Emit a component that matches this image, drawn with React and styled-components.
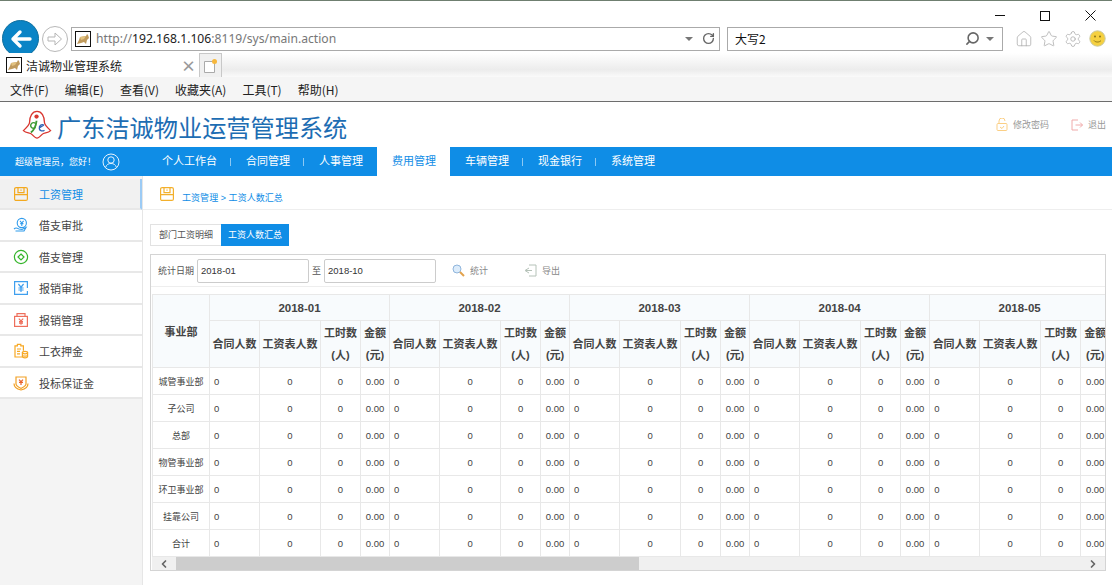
import React from 'react';
import styled, { createGlobalStyle } from 'styled-components';
import { ChevronLeft, ChevronRight, RotateCw, Search, Home, Star, Settings } from 'lucide-react';

const GlobalStyle = createGlobalStyle`
  html, body {
    margin: 0;
    padding: 0;
    height: 100%;
    overflow: hidden;
    background: #fff;
    font-family: "Liberation Sans", "Noto Sans CJK SC", sans-serif;
  }
  * { box-sizing: border-box; }
`;

const menus = ['文件(F)', '编辑(E)', '查看(V)', '收藏夹(A)', '工具(T)', '帮助(H)'];
const navs = ['个人工作台', '合同管理', '人事管理', '费用管理', '车辆管理', '现金银行', '系统管理'];
const months = ['2018-01', '2018-02', '2018-03', '2018-04', '2018-05', '2018-06', '2018-07', '2018-08', '2018-09', '2018-10'];
const depts = ['城管事业部', '子公司', '总部', '物管事业部', '环卫事业部', '挂靠公司', '合计'];

// Favicon of the tab and address bar
const Cat = () => (
  <svg width="16" height="16" viewBox="0 0 16 16">
    <rect x="0.5" y="0.5" width="15" height="15" fill="#fff" stroke="#111" />
    <path d="M2 13l2-4 1-3 6-1 1-2 1 1 1 3-2 2-1 4-2-2-3 1z" fill="#c09a5c" />
    <path d="M5 6l6-1-2 3-3 1z" fill="#e2c27f" />
  </svg>
);

const Logo = () => (
  <svg width="30" height="30" viewBox="0 0 32 32">
    <path d="M16 1.500c-5 0-8 5-8 12 0 2-3 5-6.500 8.500 3 3 7 2 9 4 2 2 4 4 5.500 4s3.500-2 5.500-4c2-2 6-1 9-4-3.500-3.500-6.500-6.500-6.500-8.500 0-7-3-12-8-12z" fill="#fff" stroke="#d9362f" strokeWidth="1.400" />
    <circle cx="15.500" cy="7" r="2.300" fill="#d9362f" />
    <path d="M15.500 11.500c-.5 5-2 9.500-6 12.500" fill="none" stroke="#3f9b35" strokeWidth="2" />
    <path d="M14.500 14.500a3 3 0 1 0 0 4" fill="none" stroke="#3f9b35" strokeWidth="1.500" />
    <path d="M23.500 16c-3-1.500-5.500 1-5 4 .5 2.500 3.500 3 5.500 1.500M18.800 19l4.700-3" fill="none" stroke="#2f62b3" strokeWidth="1.400" />
  </svg>
);

const Box = ({ color }) => (
  <svg width="16" height="16" viewBox="0 0 16 16" fill="none" stroke={color} strokeWidth="1.200">
    <rect x="1.600" y="1.600" width="12.800" height="12.800" rx="1.500" />
    <path d="M1.600 8.600h12.800M5 1.600v5h6v-5" />
    <path d="M8 3.400v1.400" />
  </svg>
);

const menuIcons = [
  <Box color="#f3a91f" />,
  <svg width="16" height="16" viewBox="0 0 16 16" fill="none" stroke="#2f9bec" strokeWidth="1.100">
    <circle cx="8.800" cy="6" r="4.600" />
    <path d="M7 3.800l1.800 2.200 1.800-2.200M8.800 6v3M7.200 6.600h3.200" />
    <path d="M1 12c2-2 3-1 5 0l3 .5 4-2-2 3.500H2.500" />
  </svg>,
  <svg width="16" height="16" viewBox="0 0 16 16" fill="none" stroke="#35b52b" strokeWidth="1.200">
    <circle cx="8" cy="8" r="6.600" />
    <path d="M8 5l3 3-3 3-3-3z" />
  </svg>,
  <svg width="16" height="16" viewBox="0 0 16 16" fill="none" stroke="#3f9fee" strokeWidth="1.200">
    <path d="M14.400 11v3.400H1.600V1.600h12.800V8" />
    <path d="M5.400 4l2.600 3.200L10.600 4M8 7.200V12M5.400 8h5.200M5.400 10h5.200" />
  </svg>,
  <svg width="16" height="16" viewBox="0 0 16 16" fill="none" stroke="#ee6f5c" strokeWidth="1.200">
    <rect x="1.600" y="4.400" width="12.800" height="10" />
    <path d="M4 4.400V1.600h8v2.800M5.800 6.600L8 8.800l2.200-2.200M8 8.800v4M6 9.600h4M6 11.200h4" />
  </svg>,
  <svg width="16" height="16" viewBox="0 0 16 16" fill="none" stroke="#f7a823" strokeWidth="1.200">
    <path d="M9.600 14H2V2.800h2.400V1.400h3.400v1.400h2.600v5" />
    <path d="M4 6h4M4 8.400h3M4 10.800h3" />
    <ellipse cx="12" cy="9.600" rx="2.600" ry="1.300" />
    <path d="M9.400 9.600v4c0 1.600 5.200 1.600 5.200 0v-4M9.400 12c0 1.500 5.200 1.500 5.200 0" />
  </svg>,
  <svg width="16" height="16" viewBox="0 0 16 16" fill="none" stroke="#f2a024" strokeWidth="1.200">
    <path d="M3 2h10v7c0 2-3 3.400-5 4.400C6 12.400 3 11 3 9z" />
    <path d="M6 4.600l2 2 2-2M8 6.600v3.400M6 7.400h4" stroke="#e8622c" />
    <path d="M1 8.400c0 3 3 5.600 7 6.600 4-1 7-3.600 7-6.600" />
  </svg>,
];

const Chrome = styled.div`
  height: 102px;
  border-top: 1px solid #6f7f70;
  border-bottom: 1px solid #6d6d6d;
  display: flex;
  flex-direction: column;
`;

const WindowButtons = styled.div`
  height: 26px;
  display: flex;
  justify-content: flex-end;
  align-items: center;
  gap: 35px;
  padding: 3px 16px 0 0;
`;

const WinMin = styled.span`
  width: 10px;
  height: 1px;
  background: #111;
`;

const WinMax = styled.span`
  width: 10px;
  height: 10px;
  border: 1px solid #111;
`;

const AddressRow = styled.div`
  height: 23px;
  display: flex;
  align-items: center;
  padding-left: 2px;
  flex: none;
`;

const BackButton = styled.div`
  width: 37px;
  height: 37px;
  border-radius: 50%;
  background: #0a84c6;
  border: 1px solid #0f6f9e;
  display: flex;
  align-items: center;
  justify-content: center;
  flex: none;
`;

const ForwardButton = styled.div`
  width: 26px;
  height: 26px;
  margin-left: 3px;
  border-radius: 50%;
  border: 1px solid #b8b8b8;
  display: flex;
  align-items: center;
  justify-content: center;
  flex: none;
`;

const UrlBox = styled.div`
  width: 649px;
  height: 24px;
  margin-left: 3px;
  border: 1px solid #aaa;
  display: flex;
  align-items: center;
  padding: 0 4px 0 3px;
  font: 12.15px "Noto Sans", "Liberation Sans", sans-serif;
  color: #777;
`;

const UrlText = styled.span`
  margin-left: 5px;
  flex: 1;
  white-space: nowrap;
  b { font-weight: 400; color: #222; }
`;

const Caret = styled.i`
  width: 0;
  height: 0;
  margin-left: ${(p) => p.$gap || 0}px;
  border-left: 4px solid transparent;
  border-right: 4px solid transparent;
  border-top: 4px solid #777;
`;

const SearchBox = styled(UrlBox)`
  width: 276px;
  margin-left: 7px;
  padding: 0 8px 0 7px;
  color: #111;
  font-family: "Noto Sans CJK SC", sans-serif;
  font-size: 12px;
  span { flex: 1; }
`;

const RightIcons = styled.div`
  display: flex;
  align-items: center;
  gap: 6.5px;
  margin-left: 12px;
  color: #aaa;
`;

const TabRow = styled.div`
  height: 24px;
  margin-top: 3px;
  display: flex;
  flex: none;
  position: relative;
  background: linear-gradient(#fff 0%, #ececec 70%, #fafafa 100%);
`;

const Tab = styled.div`
  width: 199px;
  background: #fff;
  display: flex;
  align-items: center;
  padding-left: 6px;
  font: 12px "Noto Sans CJK SC", sans-serif;
  color: #222;
  span { margin-left: 4px; flex: 1; }
  i { font-style: normal; font-weight: 700; color: #999; font-size: 15px; margin-right: 3px; }
`;

const NewTab = styled.div`
  width: 23px;
  height: 24px;
  border: 1px solid #c8c8c8;
  border-bottom: 0;
  background: #f0f0f0;
  padding: 4px 0 0 4px;
`;

const MenuBar = styled.div`
  flex: 1;
  background: #f5f5f5;
  display: flex;
  align-items: center;
  gap: 16px;
  padding-left: 10px;
  font: 12px "Noto Sans CJK SC", sans-serif;
  color: #222;
`;

const TopHeader = styled.header`
  height: 45px;
  display: flex;
  align-items: center;
  padding: 0 6px 0 22px;
`;

const SiteName = styled.h1`
  margin: 4px 0 0 5px;
  flex: 1;
  font: 400 24.2px "Noto Sans CJK SC", sans-serif;
  color: #1d6db3;
  white-space: nowrap;
`;

const HeadLink = styled.a`
  display: flex;
  align-items: center;
  gap: 5px;
  margin-left: ${(p) => p.$gap || 0}px;
  font-size: 9px;
  color: #999;
`;

const NavBar = styled.nav`
  height: 29px;
  background: #0f8de6;
  display: flex;
  align-items: center;
  color: #fff;
`;

const Greeting = styled.div`
  width: 147.4px;
  padding-left: 15px;
  display: flex;
  align-items: center;
  gap: 6px;
  font-size: 9px;
  white-space: nowrap;
`;

const NavItem = styled.div`
  height: 29px;
  padding: 0 14.5px;
  line-height: 29px;
  font-size: 11px;
  position: relative;
  background: ${(p) => (p.$active ? '#fff' : 'transparent')};
  color: ${(p) => (p.$active ? '#0f8de6' : '#fff')};
  &:not(:last-child)::after {
    content: '';
    display: ${(p) => (p.$plain ? 'none' : 'block')};
    position: absolute;
    right: 0;
    top: 11px;
    height: 8px;
    width: 1px;
    background: #8cc8f3;
  }
`;

const Body = styled.div`
  display: flex;
  height: 409px;
`;

const Sidebar = styled.aside`
  width: 143px;
  flex: none;
  padding-top: 3px;
  background: #f4f4f4;
  border-right: 1px solid #e6e6e6;
`;

const SideItem = styled.div`
  height: ${(p) => (p.$odd ? 32 : 31)}px;
  display: flex;
  align-items: center;
  padding-left: 13px;
  gap: 10px;
  font-size: 11px;
  color: ${(p) => (p.$active ? '#0f8de6' : '#444')};
  background: ${(p) => (p.$active ? '#f1f1f1' : '#fff')};
  border-bottom: 2px solid #e8e8e8;
  border-right: ${(p) => (p.$active ? '2px solid #9ccbf5' : '0')};
`;

const Main = styled.main`
  flex: 1;
  min-width: 0;
  display: flex;
  flex-direction: column;
  background: #fff;
`;

const Crumb = styled.div`
  height: 34px;
  flex: none;
  display: flex;
  align-items: center;
  padding: 3px 0 0 16px;
  gap: 7px;
  border-bottom: 1px solid #eee;
  font-size: 9px;
  letter-spacing: 0.05px;
  color: #0f8de6;
  span { margin-top: 7px; }
`;

const Tabs = styled.div`
  display: flex;
  margin: 14px 0 8px 7px;
  height: 22px;
  flex: none;
`;

const TabButton = styled.div`
  padding: 0 ${(p) => (p.$active ? 6 : 8)}px;
  line-height: 21px;
  font-size: 9px;
  border: 1px solid ${(p) => (p.$active ? '#0f8de6' : '#e2e2e2')};
  border-right: ${(p) => (p.$active ? '1px solid #0f8de6' : '0')};
  background: ${(p) => (p.$active ? '#0f8de6' : '#fff')};
  color: ${(p) => (p.$active ? '#fff' : '#555')};
`;

const Panel = styled.section`
  width: 956px;
  height: 317px;
  margin-left: 7px;
  border: 1px solid #d4d4d4;
  flex: none;
  display: flex;
  flex-direction: column;
  overflow: hidden;
`;

const Toolbar = styled.div`
  height: 32px;
  flex: none;
  display: flex;
  align-items: center;
  padding-left: 7px;
  border-bottom: 1px solid #eee;
  font-size: 9px;
  color: #555;
`;

const DateInput = styled.div`
  width: 112px;
  height: 24px;
  margin: 0 3px;
  padding-left: 3px;
  border: 1px solid #ccc;
  border-radius: 2px;
  line-height: 22px;
  font-size: 9.5px;
  color: #333;
`;

const ToolButton = styled.div`
  display: flex;
  align-items: center;
  gap: 5px;
  margin-left: ${(p) => p.$gap}px;
  color: #888;
`;

const TableScroll = styled.div`
  margin: 7px 0 0 1px;
  height: 263px;
  overflow: hidden;
  flex: none;
`;

const SheetTable = styled.table`
  width: 1857px;
  table-layout: fixed;
  border-collapse: collapse;
  font-size: 9.5px;
  color: #444;
  th, td { border: 1px solid #e8e8e8; padding: 0; }
  th { background: #f8fbfd; color: #444; font-size: 11px; font-weight: 700; }
`;

const MonthCell = styled.th`
  height: 26px;
  && { font-size: 11.5px; }
`;

const UnitCell = styled.th`
  height: 26px;
`;

const SubHead = styled.th`
  height: 47px;
  line-height: 22px;
  white-space: nowrap;
`;

const Row = styled.tr`
  height: 27px;
`;

const DeptCell = styled.td`
  text-align: center;
  && { font-size: 9px; }
`;

const NumCell = styled.td`
  text-align: ${(p) => (p.$left ? 'left' : 'center')};
  && { padding-left: ${(p) => (p.$left ? '4px' : '0')}; }
`;

const FakeScroll = styled.div`
  height: 13px;
  flex: none;
  margin-left: 1px;
  background: #f0f0f0;
  display: flex;
  align-items: center;
  color: #666;
`;

const ScrollArrow = styled.div`
  width: 24px;
  flex: none;
  display: flex;
  justify-content: center;
`;

const Thumb = styled.div`
  width: 463px;
  height: 13px;
  margin-right: auto;
  background: #cdcdcd;
`;

const App = () => {
  return (
    <>
      <GlobalStyle />
      <Chrome>
        <WindowButtons>
          <WinMin />
          <WinMax />
          <svg width="11" height="11" viewBox="0 0 11 11" stroke="#111"><path d="M.5.5l10 10M10.500.5l-10 10" /></svg>
        </WindowButtons>
        <AddressRow>
          <BackButton>
            <svg width="24" height="24" viewBox="0 0 24 24" fill="none" stroke="#fff" strokeWidth="3.400" strokeLinecap="round" strokeLinejoin="round"><path d="M21 12H4M11 5l-7 7 7 7" /></svg>
          </BackButton>
          <ForwardButton>
            <svg width="16" height="16" viewBox="0 0 16 16" fill="none" stroke="#b5b5b5"><path d="M1 6h7V2l6.500 6L8 14v-4H1z" /></svg>
          </ForwardButton>
          <UrlBox>
            <Cat />
            <UrlText>http://<b>192.168.1.106</b>:8119/sys/main.action</UrlText>
            <Caret />
            <RotateCw size={13} strokeWidth={2.500} color="#666" style={{ marginLeft: 9 }} />
          </UrlBox>
          <SearchBox>
            <span>大写2</span>
            <Search size={15} strokeWidth={2.500} color="#666" style={{ transform: 'scaleX(-1)' }} />
            <Caret $gap={6} />
          </SearchBox>
          <RightIcons>
            <Home size={18} strokeWidth={1} />
            <Star size={18} strokeWidth={1} />
            <Settings size={18} strokeWidth={1} />
            <svg width="17" height="17" viewBox="0 0 17 17">
              <circle cx="8.500" cy="8.500" r="7.700" fill="#f5d040" stroke="#c9c9a0" />
              <circle cx="6" cy="6.500" r="1" fill="#8a7416" />
              <circle cx="11" cy="6.500" r="1" fill="#8a7416" />
              <path d="M5 10.500c1.500 2 5.500 2 7 0" fill="none" stroke="#8a7416" />
            </svg>
          </RightIcons>
        </AddressRow>
        <TabRow>
          <Tab>
            <Cat />
            <span>洁诚物业管理系统</span>
            <i>×</i>
          </Tab>
          <NewTab>
            <svg width="14" height="15" viewBox="0 0 14 15"><path d="M.5 3.500h8l2 2v9H.5z" fill="#fff" stroke="#aaa" /><circle cx="10.500" cy="3.500" r="2.500" fill="#f6b73c" /></svg>
          </NewTab>
        </TabRow>
        <MenuBar>
          {menus.map((m) => <span key={m}>{m}</span>)}
        </MenuBar>
      </Chrome>

      <TopHeader>
        <Logo />
        <SiteName>广东洁诚物业运营管理系统</SiteName>
        <HeadLink>
          <svg width="12" height="13" viewBox="0 0 12 13" fill="none" stroke="#fbcf85"><rect x="1" y="5.500" width="10" height="7" rx="1" /><path d="M3 5.500V3a3 3 0 0 1 6 0M4 9l2 1.500L8 8" /></svg>
          修改密码
        </HeadLink>
        <HeadLink $gap={22}>
          <svg width="12" height="12" viewBox="0 0 12 12" fill="none" stroke="#f0aaaa"><path d="M7 1H1v10h6M4.500 6h7M9 3.500L11.500 6 9 8.500" /></svg>
          退出
        </HeadLink>
      </TopHeader>

      <NavBar>
        <Greeting>
          超级管理员，您好！
          <svg width="18" height="18" viewBox="0 0 18 18" fill="none" stroke="#e6f3fd"><circle cx="9" cy="9" r="8" /><circle cx="9" cy="7" r="3.200" /><path d="M3.500 14.500c1-3 3-4 5.500-4s4.500 1 5.500 4" /></svg>
        </Greeting>
        {navs.map((n, i) => (
          <NavItem key={n} $active={i === 3} $plain={i === 2 || i === 3}>{n}</NavItem>
        ))}
      </NavBar>

      <Body>
        <Sidebar>
          {['工资管理', '借支审批', '借支管理', '报销审批', '报销管理', '工衣押金', '投标保证金'].map((s, i) => (
            <SideItem key={s} $active={i === 0} $odd={i % 2 === 1}>
              {menuIcons[i]}
              {s}
            </SideItem>
          ))}
        </Sidebar>

        <Main>
          <Crumb>
            <Box color="#f3b02c" />
            <span>工资管理 &gt; 工资人数汇总</span>
          </Crumb>
          <Tabs>
            <TabButton>部门工资明细</TabButton>
            <TabButton $active>工资人数汇总</TabButton>
          </Tabs>
          <Panel>
            <Toolbar>
              统计日期
              <DateInput>2018-01</DateInput>
              至
              <DateInput>2018-10</DateInput>
              <ToolButton $gap={13}>
                <svg width="13" height="13" viewBox="0 0 13 13" fill="none"><circle cx="5" cy="5" r="4" fill="#dcecfb" stroke="#8fb5dc" /><path d="M8 8l4 4" stroke="#e2a24c" strokeWidth="2" /></svg>
                统计
              </ToolButton>
              <ToolButton $gap={36}>
                <svg width="13" height="13" viewBox="0 0 13 13" fill="none" stroke="#b5c2b8"><path d="M5 1h7v11H5M5 4L1 6.500 5 9M2 6.500h6" /></svg>
                导出
              </ToolButton>
            </Toolbar>
            <TableScroll>
              <SheetTable>
                <colgroup>
                  <col width="57" />
                  {months.map((m) => (
                    <React.Fragment key={m}>
                      <col width="50" />
                      <col width="61" />
                      <col width="40" />
                      <col width="29" />
                    </React.Fragment>
                  ))}
                </colgroup>
                <thead>
                  <tr>
                    <UnitCell rowSpan={2}>事业部</UnitCell>
                    {months.map((m) => <MonthCell key={m} colSpan={4}>{m}</MonthCell>)}
                  </tr>
                  <tr>
                    {months.map((m) => (
                      <React.Fragment key={m}>
                        <SubHead>合同人数</SubHead>
                        <SubHead>工资表人数</SubHead>
                        <SubHead>工时数<br />(人)</SubHead>
                        <SubHead>金额<br />(元)</SubHead>
                      </React.Fragment>
                    ))}
                  </tr>
                </thead>
                <tbody>
                  {depts.map((d) => (
                    <Row key={d}>
                      <DeptCell>{d}</DeptCell>
                      {months.map((m) => (
                        <React.Fragment key={m}>
                          <NumCell $left>0</NumCell>
                          <NumCell>0</NumCell>
                          <NumCell>0</NumCell>
                          <NumCell>0.00</NumCell>
                        </React.Fragment>
                      ))}
                    </Row>
                  ))}
                </tbody>
              </SheetTable>
            </TableScroll>
            <FakeScroll>
              <ScrollArrow><ChevronLeft size={12} strokeWidth={3.500} /></ScrollArrow>
              <Thumb />
              <ScrollArrow><ChevronRight size={12} strokeWidth={3.500} /></ScrollArrow>
            </FakeScroll>
          </Panel>
        </Main>
      </Body>
    </>
  );
};

export default App;
